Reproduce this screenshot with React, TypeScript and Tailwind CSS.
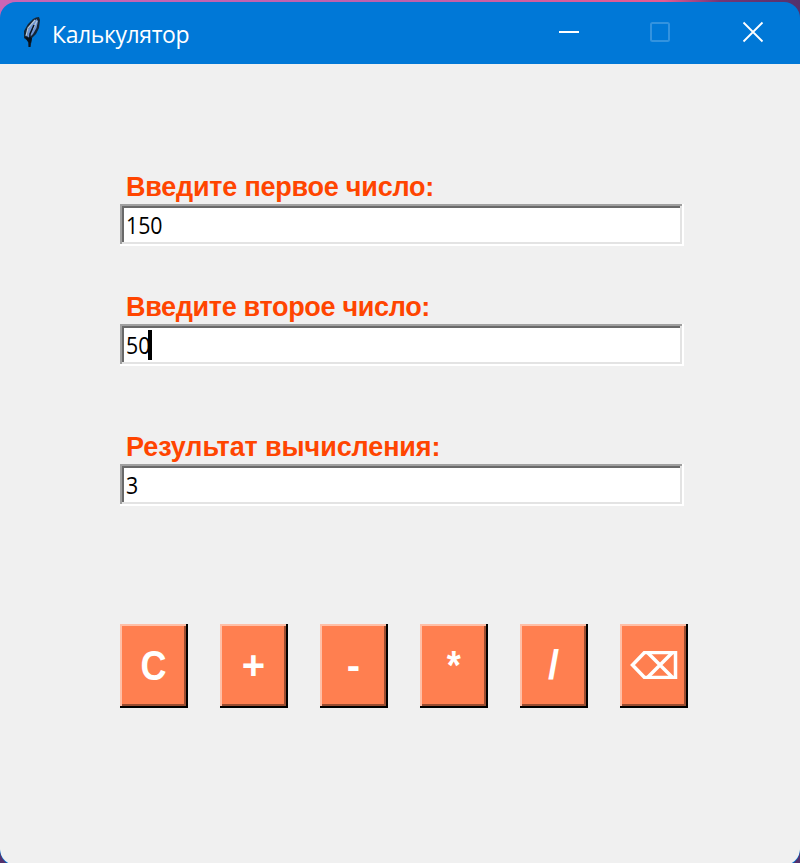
import type { ReactNode } from "react";

function Field({ label, labelSpacing, value, caret }: { label: string; labelSpacing: string; value: string; caret?: boolean }) {
  return (
    <div className="w-[564px]">
      <div className={`flex h-[40px] items-center pl-[6px] pt-[7px] font-['Liberation_Sans',Arial,sans-serif] text-[27px] font-bold whitespace-nowrap text-[#ff4500] ${labelSpacing}`}>
        <span>{label}</span>
      </div>
      <div className="border-r-2 border-b-2 border-white">
        <div className="border-t-2 border-l-2 border-[#a0a0a0]">
          <div className="border-r-2 border-b-2 border-[#e3e3e3]">
            <div className="flex h-[36px] items-center border-t-2 border-l-2 border-[#696969] bg-white pl-[2px] font-['Open_Sans','Noto_Sans',sans-serif] text-[24.5px] leading-[34px] text-black">
              <span className="origin-left scale-x-[0.87]">{value}</span>
              {caret && <span className="-ml-[6px] h-[30px] w-[4px] bg-black" />}
            </div>
          </div>
        </div>
      </div>
    </div>
  );
}

function Key({ children }: { children: ReactNode }) {
  return (
    <button className="block h-[84px] w-[68px] border-r-2 border-b-2 border-black">
      <span className="block h-full border-t-2 border-l-2 border-[#ffbfa7]">
        <span className="flex h-full items-center justify-center border-r-2 border-b-2 border-[#994c30] bg-[#ff7f50] pl-px font-['Liberation_Sans',Arial,sans-serif] text-[40px] leading-none font-bold text-white">
          {children}
        </span>
      </span>
    </button>
  );
}

function Feather() {
  return (
    <svg className="h-[34px] w-[20px]" viewBox="0 0 20 34">
      <path d="M14 1.500 L17 1 L18 4 L17 12 L14 18 L10 22 L8.500 31 L6.500 31 L6 25 L2 22 L2 15 L6 8 L11 3Z" fill="#142638" />
      <path d="M14.500 3 L16 5 L14.500 12 L11 18 L7 22 L5 20 L5.500 14 L10 7Z" fill="#6c94d4" />
      <path d="M13 4 L6 12 L4 20 M15 5 L11 13" stroke="#b7c7d5" strokeWidth="1.200" fill="none" />
      <path d="M12 9 L8 18 L7.500 31" stroke="#07121e" strokeWidth="1.500" fill="none" />
      <path d="M3 21 L10 22 L9 27 L6 26Z" fill="#07111b" />
    </svg>
  );
}

export default function App() {
  return (
    <div className="h-[863px] w-[800px] overflow-hidden bg-[#54316c]">
      <div className="h-[866px] bg-[linear-gradient(90deg,#c965b5_0%,#bd60ad_50%,#e75a91_83%,#743675_90%,#54316c_100%)] bg-[length:100%_20px] bg-no-repeat pt-[2px]">
        <div className="flex h-[864px] flex-col overflow-hidden rounded-[16px] bg-[#0078d7] pb-px">
          <header className="flex h-[62px] shrink-0 items-start">
            <div className="flex pt-[14px] pl-[22px]">
              <Feather />
              <h1 className="ml-[10px] font-['Open_Sans','Noto_Sans',sans-serif] text-[23px] leading-[37px] tracking-[-0.4px] text-white">Калькулятор</h1>
            </div>
            <div className="mr-[36px] ml-auto flex gap-[71px] pt-[19px]">
              <svg className="h-[22px] w-[22px]" viewBox="0 0 22 22"><path d="M1 11H21" stroke="white" strokeWidth="2" /></svg>
              <svg className="-ml-[2px] h-[22px] w-[22px]" viewBox="0 0 22 22"><rect x="2" y="2" width="18" height="18" rx="1.5" fill="none" stroke="#3393df" strokeWidth="2" /></svg>
              <svg className="h-[22px] w-[22px]" viewBox="0 0 22 22"><path d="M1.5 1.5L20.5 20.5M20.5 1.5L1.5 20.5" stroke="white" strokeWidth="1.8" /></svg>
            </div>
          </header>
          <main className="flex-1 rounded-b-[16px] bg-[#f0f0f0] pt-[100px] pl-[120px]">
            <Field label="Введите первое число:" labelSpacing="tracking-[-0.23px]" value="150" />
            <div className="h-[38px]" />
            <Field label="Введите второе число:" labelSpacing="tracking-[-0.33px]" value="50" caret />
            <div className="h-[58px]" />
            <Field label="Результат вычисления:" labelSpacing="tracking-[-0.1px]" value="3" />
            <div className="mt-[118px] flex gap-8">
              <Key><span className="scale-x-[0.9] scale-y-[1.04]">C</span></Key>
              <Key>+</Key>
              <Key>-</Key>
              <Key><span className="scale-x-[0.9]">*</span></Key>
              <Key>/</Key>
              <Key>
                <svg className="h-[28px] w-[48px]" viewBox="0 0 48 28" fill="none" stroke="white">
                  <path d="M14.5 1.5H45.5V26.5H14.5L2.500 14Z" strokeWidth="3.500" />
                  <path d="M18 2L42 26M42 2L18 26" strokeWidth="3.500" />
                </svg>
              </Key>
            </div>
          </main>
        </div>
      </div>
    </div>
  );
}
